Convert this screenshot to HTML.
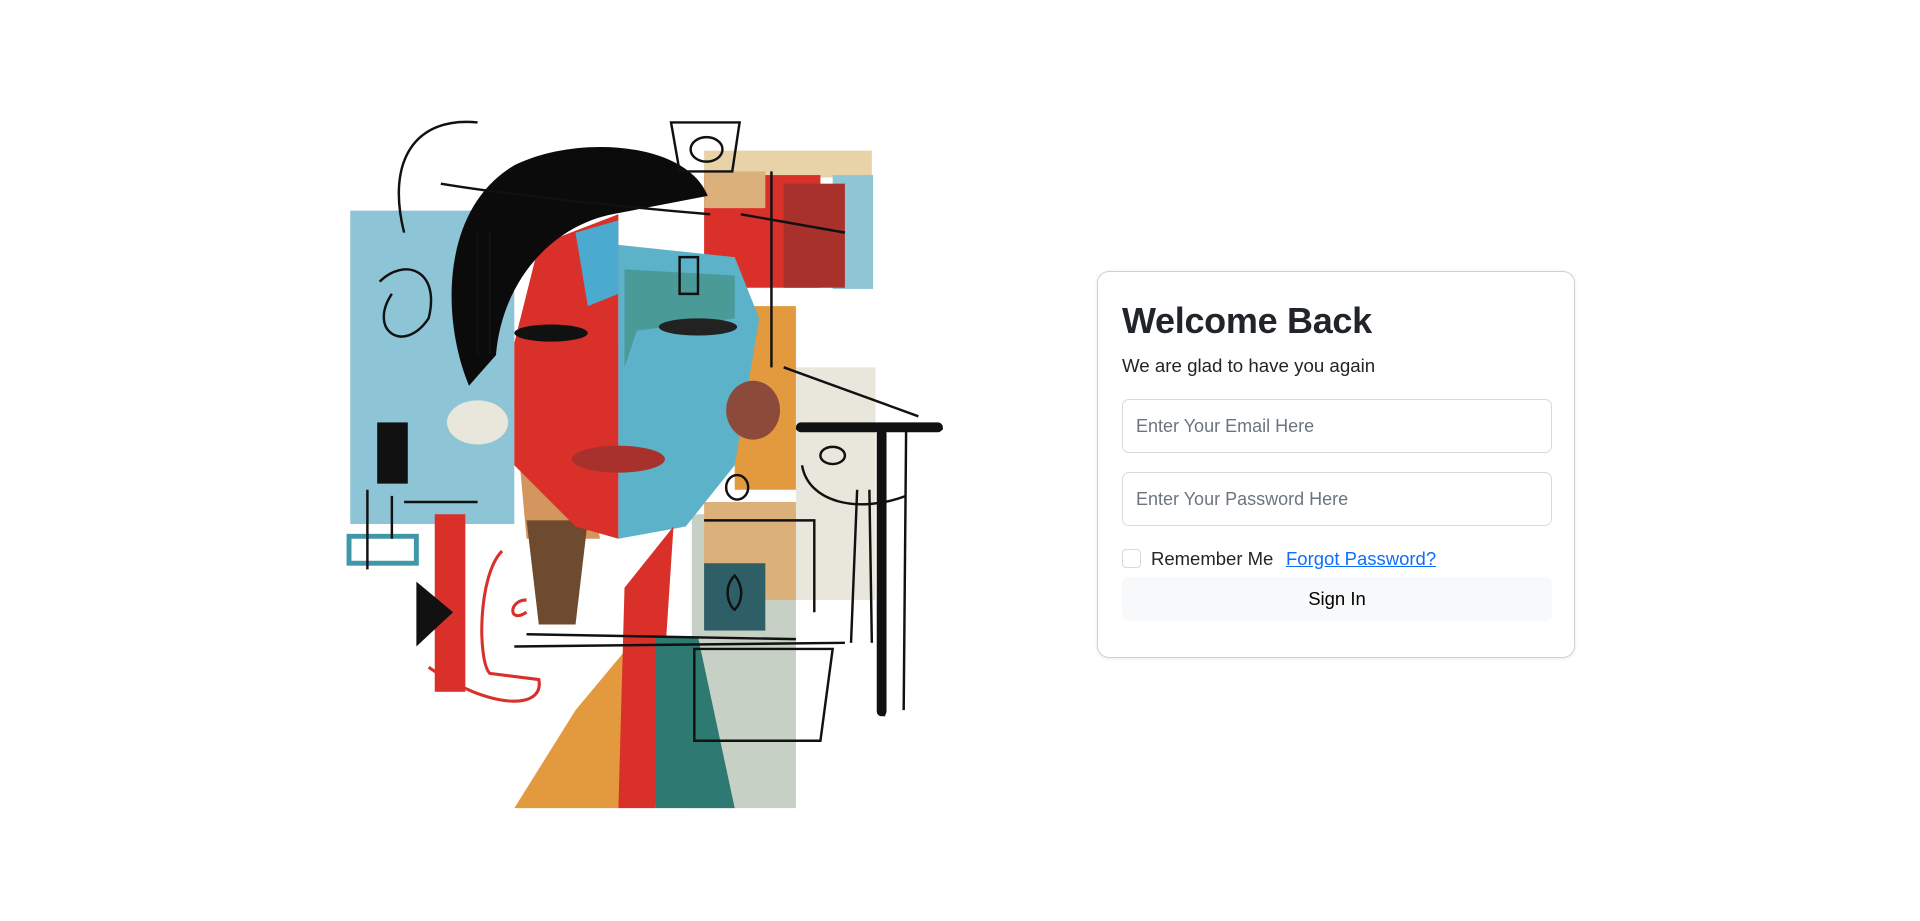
<!DOCTYPE html>
<html><head><meta charset="utf-8"><style>
*{box-sizing:border-box;margin:0;padding:0}
body{width:1920px;height:921px;background:#fff;position:relative;overflow:hidden;font-family:"Liberation Sans",sans-serif;color:#212529}
.card{position:absolute;left:1097px;top:271px;width:478px;height:387px;border:1px solid #cfd1d3;border-radius:12px;box-shadow:0 1px 4px rgba(0,0,0,.08);background:#fff}
h1{position:absolute;left:24px;top:27px;font-size:36px;font-weight:bold;letter-spacing:-0.3px;line-height:44px}
.sub{position:absolute;left:24px;top:83px;font-size:18.7px;line-height:22px}
.inp{position:absolute;left:24px;width:430px;height:54px;border:1px solid #d7dadd;border-radius:7px;font-size:18px;color:#6c757d;padding:16px 13px;line-height:20px}
.cb{position:absolute;left:24px;top:277px;width:19px;height:19px;border:1px solid #d7dadd;border-radius:4px}
.rm{position:absolute;left:53px;top:276px;font-size:18.5px;line-height:22px}
.fp{position:absolute;left:188px;top:276px;font-size:18.5px;line-height:22px;color:#0d6efd;text-decoration:underline}
.btn{position:absolute;left:24px;top:305px;width:430px;height:44px;background:#f8f9fa;border-radius:7px;text-align:center;font-size:18.5px;line-height:44px;color:#000}
</style></head><body>
<svg style="position:absolute;left:0;top:0" width="1920" height="921" viewBox="0 0 1568 752.2">
<rect x="286" y="172" width="134" height="256" fill="#8ec5d6"/>
<rect x="575" y="123" width="137" height="22" fill="#e8d3a8"/>
<rect x="680" y="143" width="33" height="93" fill="#8fc6d6"/>
<rect x="575" y="143" width="95" height="92" fill="#d9302a"/>
<rect x="640" y="150" width="50" height="85" fill="#a8322b"/>
<rect x="575" y="140" width="50" height="30" fill="#dcb07a"/>
<rect x="600" y="250" width="50" height="150" fill="#e39a3e"/>
<rect x="650" y="300" width="65" height="190" fill="#e9e6dc"/>
<rect x="565" y="420" width="85" height="240" fill="#c7d0c4"/>
<rect x="575" y="410" width="75" height="80" fill="#dcb07a"/>
<rect x="575" y="460" width="50" height="55" fill="#2e5f66"/>
<polygon points="420,330 470,330 490,440 430,440" fill="#d4955e"/>
<polygon points="430,425 480,425 470,510 440,510" fill="#6e4a2e"/>
<polygon points="420,280 440,200 505,175 505,440 470,430 420,380" fill="#d9302a"/>
<polygon points="505,200 600,210 620,260 600,380 560,430 505,440" fill="#5bb2c9"/>
<polygon points="510,220 600,225 600,260 520,270 510,300" fill="#4a9a98"/>
<polygon points="470,190 505,180 505,240 480,250" fill="#4aaad0"/>
<path d="M383,315 C360,260 360,170 420,135 C470,110 560,115 578,160 L500,175 C450,185 410,230 405,290 Z" fill="#0b0b0b"/>
<polygon points="420,660 470,580 520,520 505,660" fill="#e39a3e"/>
<polygon points="505,660 510,480 550,430 535,660" fill="#d9302a"/>
<polygon points="535,660 535,520 570,520 600,660" fill="#2e7a72"/>
<rect x="355" y="420" width="25" height="145" fill="#d9302a"/>
<rect x="308" y="345" width="25" height="50" fill="#111"/>
<rect x="285" y="438" width="55" height="22" fill="none" stroke="#3f97a8" stroke-width="4"/>
<polygon points="340,475 370,500 340,528" fill="#111"/>
<ellipse cx="505" cy="375" rx="38" ry="11" fill="#a8322b"/>
<ellipse cx="450" cy="272" rx="30" ry="7" fill="#111"/>
<ellipse cx="570" cy="267" rx="32" ry="7" fill="#222"/>
<ellipse cx="390" cy="345" rx="25" ry="18" fill="#e9e6dc"/>
<ellipse cx="615" cy="335" rx="22" ry="24" fill="#8b4a3a"/>
<g fill="none" stroke="#111" stroke-width="2">
<path d="M390,100 C340,95 315,130 330,190"/><path d="M360,150 C420,160 520,170 580,175"/>
<path d="M548,100 L604,100 L598,140 L555,140 Z"/><ellipse cx="577" cy="122" rx="13" ry="10"/>
<path d="M650,350 L770,350"/><path d="M640,300 L750,340"/><path d="M720,350 L722,585"/>
<path d="M740,350 L738,580"/><path d="M700,400 L695,525"/><path d="M710,400 L712,525"/>
<path d="M575,425 L665,425 L665,500"/><path d="M567,530 L680,530 L670,605 L567,605 Z"/>
<path d="M430,518 L650,522"/><path d="M420,528 L690,525"/><ellipse cx="680" cy="372" rx="10" ry="7"/>
<path d="M655,380 C660,410 700,420 740,405"/><ellipse cx="602" cy="398" rx="9" ry="10"/>
<path d="M600,470 C590,480 595,495 600,498 C606,492 608,480 600,470Z"/>
<path d="M310,230 C330,210 360,220 350,260 C330,290 300,270 320,240"/>
<path d="M330,410 L390,410"/><path d="M300,400 L300,465"/><path d="M320,405 L320,440"/>
<path d="M390,190 L390,290"/><path d="M400,190 L400,290"/><path d="M555,210 L570,210 L570,240 L555,240Z"/>
<path d="M630,140 L630,300"/><path d="M605,175 L690,190"/>
</g>
<g fill="none" stroke="#d9302a" stroke-width="2.5"><path d="M410,450 C390,470 390,540 400,550 L440,555 C445,580 400,580 350,545"/><path d="M430,490 C415,490 415,510 430,500"/></g>
<rect x="650" y="345" width="120" height="8" rx="4" fill="#111"/>
<rect x="716" y="350" width="8" height="235" rx="4" fill="#111"/>
</svg>
<div class="card">
<h1>Welcome Back</h1>
<div class="sub">We are glad to have you again</div>
<div class="inp" style="top:127px">Enter Your Email Here</div>
<div class="inp" style="top:200px">Enter Your Password Here</div>
<div class="cb"></div>
<div class="rm">Remember Me</div>
<div class="fp">Forgot Password?</div>
<div class="btn">Sign In</div>
</div>
</body></html>
